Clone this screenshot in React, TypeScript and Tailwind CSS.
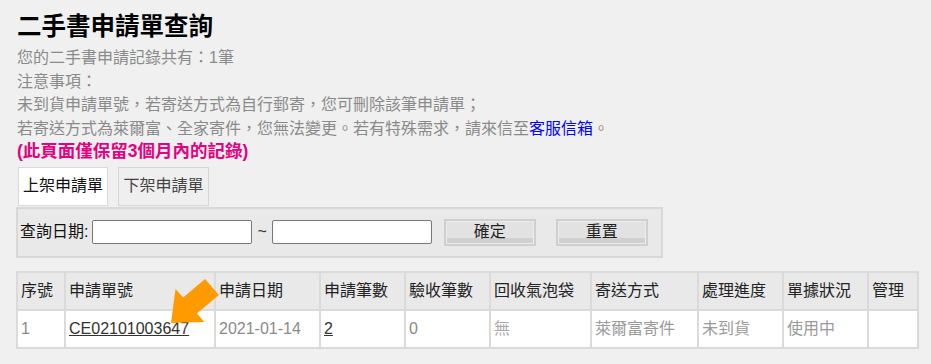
import React from 'react'

const font = { fontFamily: '"Liberation Sans", "Noto Sans CJK TC", sans-serif' }

const columns = [
  { label: '序號', width: 48 },
  { label: '申請單號', width: 150 },
  { label: '申請日期', width: 105 },
  { label: '申請筆數', width: 85 },
  { label: '驗收筆數', width: 85 },
  { label: '回收氣泡袋', width: 101 },
  { label: '寄送方式', width: 107 },
  { label: '處理進度', width: 85 },
  { label: '單據狀況', width: 85 },
  { label: '管理', width: 50 },
]

const Button: React.FC<{ label: string }> = ({ label }) => (
  <button className="w-[92px] h-[27px] border-2 border-[#cfcfcf] shadow-[inset_0_0_0_1px_#ececec] bg-[linear-gradient(to_bottom,#e2e2e2_0%,#e2e2e2_72%,#d0d0d0_72%,#d0d0d0_100%)] text-[16px] leading-[22px] text-[#222]">
    {label}
  </button>
)

const App: React.FC = () => {
  return (
    <div className="min-h-screen bg-[#f0f0f0] px-4 pt-[11px]" style={font}>
      {/* header text */}
      <h1 className="text-[24.5px] leading-[32px] font-bold text-black ml-px">二手書申請單查詢</h1>
      <div className="mt-[3px] ml-px text-[16px] leading-[23.5px] text-[#8a8a8a]">
        <p>您的二手書申請記錄共有：1筆</p>
        <p>注意事項：</p>
        <p>未到貨申請單號，若寄送方式為自行郵寄，您可刪除該筆申請單；</p>
        <p>
          若寄送方式為萊爾富、全家寄件，您無法變更。若有特殊需求，請來信至
          <a href="#" className="text-[#0000ff]">客服信箱</a>。
        </p>
        <p className="font-bold text-[17.5px] text-[#e4007f]">(此頁面僅保留3個月內的記錄)</p>
      </div>

      {/* tabs */}
      <div className="flex gap-[10px] ml-[2px] mt-[3px]">
        <div className="w-[90px] h-[39px] flex items-center justify-center bg-white border border-[#dadada] text-[16px] text-[#111]">
          上架申請單
        </div>
        <div className="w-[91px] h-[39px] flex items-center justify-center bg-[#efefef] border border-[#d6d6d6] text-[16px] text-[#444]">
          下架申請單
        </div>
      </div>

      {/* search */}
      <div className="mt-px w-[647px] h-[51px] bg-[#e9e9e9] border-2 border-[#d8d8d8] flex items-center pl-[2px] text-[16px] text-[#111]">
        <span>查詢日期:</span>
        <input className="ml-[4px] w-[160px] h-[24px] bg-white border border-[#767676] rounded-[2px]" />
        <span className="px-[5px] text-[#333]">~</span>
        <input className="w-[160px] h-[24px] bg-white border border-[#767676] rounded-[2px]" />
        <div className="ml-[12px]">
          <Button label="確定" />
        </div>
        <div className="ml-[20px]">
          <Button label="重置" />
        </div>
      </div>

      {/* result table */}
      <div className="relative mt-[13px]">
        <table className="table-fixed border-collapse w-[903px] text-[16px]">
          <colgroup>
            {columns.map((c) => (
              <col key={c.label} style={{ width: c.width }} />
            ))}
          </colgroup>
          <thead>
            <tr className="bg-[#e9e9e9]">
              {columns.map((c) => (
                <th key={c.label} className="h-[38px] border-2 border-[#dadada] pl-[3px] text-left font-normal text-[#222]">
                  {c.label}
                </th>
              ))}
            </tr>
          </thead>
          <tbody>
            <tr className="bg-white text-[#8a8a8a]">
              <td className="h-[38px] border-2 border-[#dadada] pl-[3px]">1</td>
              <td className="border-2 border-[#dadada] pl-[3px]">
                <a href="#" className="underline text-[#333]">CE02101003647</a>
              </td>
              <td className="border-2 border-[#dadada] pl-[3px]">2021-01-14</td>
              <td className="border-2 border-[#dadada] pl-[3px]">
                <a href="#" className="underline text-[#333]">2</a>
              </td>
              <td className="border-2 border-[#dadada] pl-[3px]">0</td>
              <td className="border-2 border-[#dadada] pl-[3px] text-[#a8a8a8]">無</td>
              <td className="border-2 border-[#dadada] pl-[3px] text-[#9a9a9a]">萊爾富寄件</td>
              <td className="border-2 border-[#dadada] pl-[3px] text-[#9a9a9a]">未到貨</td>
              <td className="border-2 border-[#dadada] pl-[3px] text-[#9a9a9a]">使用中</td>
              <td className="border-2 border-[#dadada]"></td>
            </tr>
          </tbody>
        </table>

        {/* orange pointer arrow */}
        <svg className="absolute left-[149px] top-[4px] pointer-events-none" width="60" height="60" viewBox="165 275 60 60">
          <polygon
            fill="#ff9b00"
            points="205.1,279.1 218.9,294.9 196.9,313.4 204.5,322 171,323 175.5,289 183.1,297.6"
          />
        </svg>
      </div>
    </div>
  )
}

export default App
